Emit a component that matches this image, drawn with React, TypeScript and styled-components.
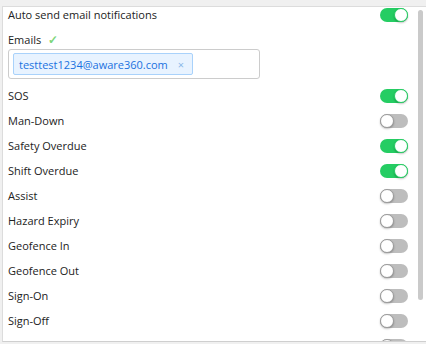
import React, { useState } from 'react';
import styled, { createGlobalStyle } from 'styled-components';

const GlobalStyle = createGlobalStyle`
  html, body {
    margin: 0;
    padding: 0;
    background: #f0f0f0;
    font-family: 'Open Sans', 'Noto Sans', sans-serif;
    font-size: 11px;
    color: #222;
  }
`;

const Panel = styled.div`
  position: relative;
  margin: 6px 0 0 2px;
  height: 336px;
  background: #fff;
  border-top: 1px solid #dcdcdc;
  border-left: 1px solid #dcdcdc;
  border-bottom: 1px solid #cfcfcf;
  box-sizing: border-box;
  overflow: hidden;
`;

const Content = styled.div`
  height: 100%;
  overflow: hidden;
  padding: 0 18px 0 5px;
  box-sizing: border-box;
`;

// overlay scrollbar thumb on the panel's right edge
const ScrollThumb = styled.div`
  position: absolute;
  top: 3px;
  right: 3px;
  width: 5px;
  height: 290px;
  border-radius: 3px;
  background: #cacaca;
`;

const Row = styled.div<{ $first?: boolean }>`
  display: flex;
  align-items: center;
  justify-content: space-between;
  height: ${(p) => (p.$first ? '15px' : '25px')};
`;

const Label = styled.span`
  line-height: 16px;
`;

const Track = styled.button<{ $on: boolean }>`
  position: relative;
  width: 28px;
  height: 14px;
  padding: 0;
  border: none;
  border-radius: 7px;
  background: ${(p) => (p.$on ? '#25cd63' : '#bdbdbd')};
  cursor: pointer;
`;

const Knob = styled.span<{ $on: boolean }>`
  position: absolute;
  top: 0;
  left: ${(p) => (p.$on ? '14px' : '0')};
  width: 14px;
  height: 14px;
  box-sizing: border-box;
  border-radius: 50%;
  background: #fff;
  border: 1px solid ${(p) => (p.$on ? '#25cd63' : '#9a9a9a')};
  box-shadow: 0 1px 2px rgba(0, 0, 0, 0.25);
`;

const EmailBlock = styled.div`
  padding: 9px 0 4px;
`;

const EmailLabel = styled.div`
  display: flex;
  align-items: center;
  gap: 7px;
  height: 16px;
  margin-bottom: 2px;
`;

const Check = styled.span`
  color: #7dd67a;
  font-size: 12px;
  font-weight: 600;
`;

const TagInput = styled.div`
  width: 252px;
  height: 30px;
  box-sizing: border-box;
  border: 1px solid #cccccc;
  border-radius: 3px;
  padding: 3px 4px;
  display: flex;
  align-items: center;
`;

const Tag = styled.span`
  display: inline-flex;
  align-items: center;
  gap: 10px;
  height: 22px;
  box-sizing: border-box;
  padding: 0 8px 0 5px;
  background: #e8f3ff;
  border: 1px solid #a9d2fb;
  border-radius: 2px;
  color: #1a72e0;
  font-size: 11px;
`;

const Remove = styled.span`
  color: #8ab8e8;
  font-size: 11px;
  cursor: pointer;
`;

function Toggle({ on }: { on: boolean }) {
  const [value, setValue] = useState(on);
  return (
    <Track $on={value} onClick={() => setValue(!value)}>
      <Knob $on={value} />
    </Track>
  );
}

const alerts: [string, boolean][] = [
  ['SOS', true],
  ['Man-Down', false],
  ['Safety Overdue', true],
  ['Shift Overdue', true],
  ['Assist', false],
  ['Hazard Expiry', false],
  ['Geofence In', false],
  ['Geofence Out', false],
  ['Sign-On', false],
  ['Sign-Off', false],
  ['Check-In', false],
];

export default function App() {
  return (
    <>
      <GlobalStyle />
      <Panel>
        <Content>
          <Row $first>
            <Label>Auto send email notifications</Label>
            <Toggle on />
          </Row>
          <EmailBlock>
            <EmailLabel>
              Emails <Check>✓</Check>
            </EmailLabel>
            <TagInput>
              <Tag>
                testtest1234@aware360.com <Remove>×</Remove>
              </Tag>
            </TagInput>
          </EmailBlock>
          {alerts.map(([name, on]) => (
            <Row key={name}>
              <Label>{name}</Label>
              <Toggle on={on} />
            </Row>
          ))}
        </Content>
        <ScrollThumb />
      </Panel>
    </>
  );
}
